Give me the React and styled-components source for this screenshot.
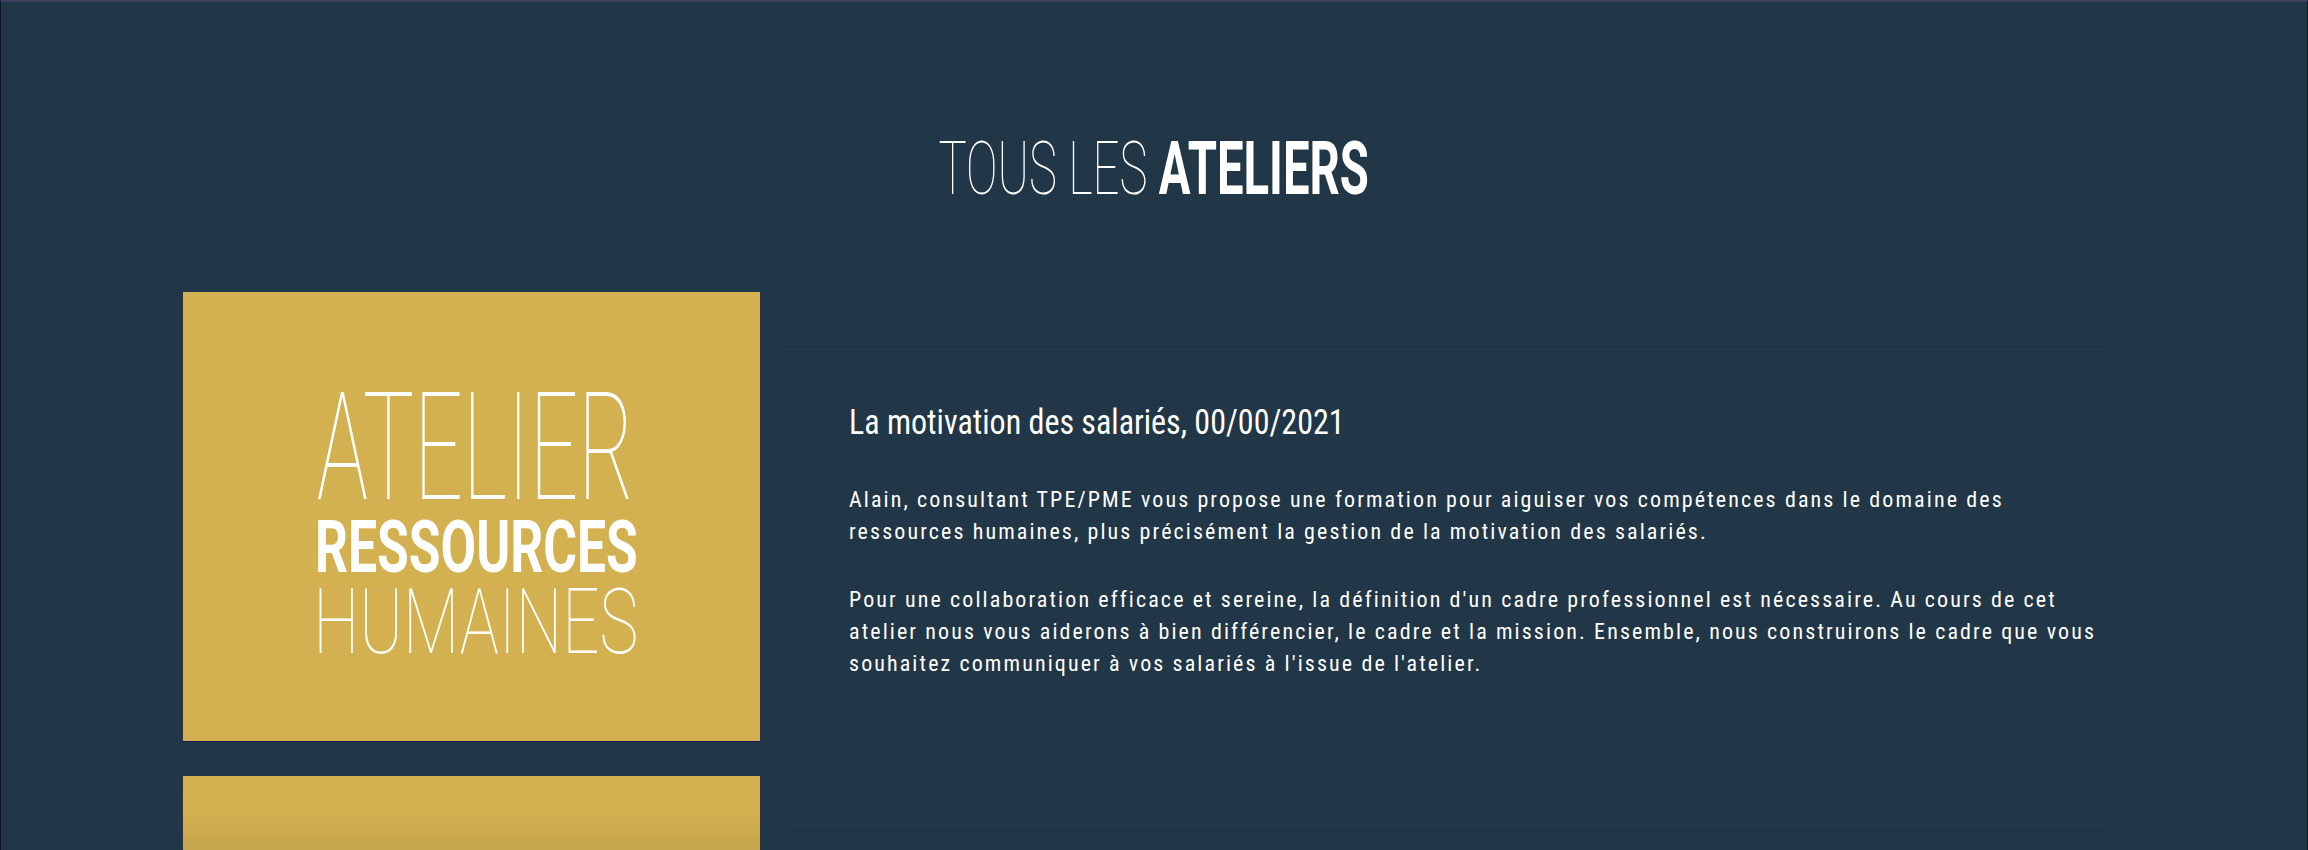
import React from "react";
import styled, { createGlobalStyle } from "styled-components";

const GlobalStyle = createGlobalStyle`
  html, body { margin: 0; padding: 0; background: #213646; }
  * { box-sizing: border-box; }
`;

const Page = styled.div`
  min-height: 850px;
  height: 850px;
  overflow: hidden;
  background: #213646;
  border-top: 2px solid #3a3e5a;
  border-left: 1px solid #0f1320;
  border-right: 1px solid #0f1320;
  color: #ffffff;
`;

const TitleWrap = styled.header`
  padding-top: 121px;
  text-align: center;
`;

const Title = styled.h1`
  display: inline-block;
  margin: 0;
  font-family: Roboto, "Noto Sans", sans-serif;
  font-size: 75px;
  line-height: 90px;
  font-weight: 100;
  color: #ffffff;
  white-space: nowrap;
  transform: scaleX(0.63);
  transform-origin: center;
`;

const Strong = styled.span`
  font-weight: 700;
`;

const List = styled.main`
  margin-top: 79px;
  padding-left: 181px;
  display: flex;
  flex-direction: column;
  gap: 34px;
`;

const Row = styled.article`
  display: grid;
  grid-template-columns: 579px 1323px;
  column-gap: 24px;
`;

const Card = styled.div`
  height: 450px;
  background: ${(p) =>
    p.$fade
      ? "linear-gradient(180deg, #d3b151 0px, #d2b050 40px, #c6a64c 74px, #c2a24b 100%)"
      : "#d3b151"};
  border-left: 1px solid #2b3345;
  border-right: 1px solid #2b3345;
  border-bottom: 1px solid #16185a;
  display: flex;
  flex-direction: column;
  align-items: center;
  padding-top: 81px;
  padding-left: 9px;
  color: #ffffff;
`;

const CardLine = styled.div`
  font-family: Roboto, "Noto Sans", sans-serif;
  font-size: ${(p) => p.$size}px;
  line-height: ${(p) => p.$lh}px;
  font-weight: ${(p) => p.$weight};
  white-space: nowrap;
  transform: scaleX(${(p) => p.$scale});
  transform-origin: center;
`;

const Info = styled.div`
  padding-top: 54px;
`;

const Divider = styled.hr`
  margin: 0;
  border: 0;
  border-top: 1px solid #1d3040;
  height: 0;
`;

const Body = styled.div`
  padding-left: 64px;
  padding-top: 55px;
`;

const Heading = styled.h2`
  margin: 0;
  font-family: "Roboto Condensed", Roboto, sans-serif;
  font-weight: 400;
  font-size: 35px;
  line-height: 42px;
  color: #ffffff;
  white-space: nowrap;
  transform: scaleX(0.915);
  transform-origin: left center;
`;

const Text = styled.p`
  margin: 0;
  width: 1262px;
  font-family: "Roboto Condensed", Roboto, sans-serif;
  font-weight: 400;
  font-size: 22px;
  line-height: 32px;
  letter-spacing: 2.1px;
  color: #ffffff;
  & + & { margin-top: 36px; }
  &:first-of-type { margin-top: 40px; }
`;

export default function App() {
  return (
    <Page>
      <GlobalStyle />
      <TitleWrap>
        <Title>
          TOUS LES <Strong>ATELIERS</Strong>
        </Title>
      </TitleWrap>
      <List>
        <Row>
          <Card>
            <CardLine $size={150} $lh={150} $weight={100} $scale={0.572}>
              ATELIER
            </CardLine>
            <CardLine $size={73} $lh={49} $weight={700} $scale={0.707}>
              RESSOURCES
            </CardLine>
            <CardLine $size={91} $lh={100} $weight={100} $scale={0.72}>
              HUMAINES
            </CardLine>
          </Card>
          <Info>
            <Divider />
            <Body>
              <Heading>La motivation des salariés, 00/00/2021</Heading>
              <Text>
                Alain, consultant TPE/PME vous propose une formation pour aiguiser vos
                compétences dans le domaine des ressources humaines, plus précisément la
                gestion de la motivation des salariés.
              </Text>
              <Text>
                Pour une collaboration efficace et sereine, la définition d'un cadre
                professionnel est nécessaire. Au cours de cet atelier nous vous aiderons à
                bien différencier, le cadre et la mission. Ensemble, nous construirons le
                cadre que vous souhaitez communiquer à vos salariés à l'issue de l'atelier.
              </Text>
            </Body>
          </Info>
        </Row>
        <Row>
          <Card $fade />
          <Info>
            <Divider />
          </Info>
        </Row>
      </List>
    </Page>
  );
}
